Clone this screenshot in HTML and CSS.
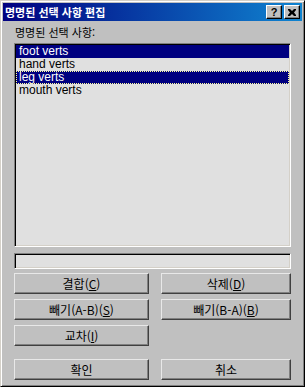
FILE: index.html
```html
<!DOCTYPE html>
<html lang="ko">
<head>
<meta charset="UTF-8">
<meta name="viewport" content="width=device-width, initial-scale=1.0">
<title>명명된 선택 사항 편집</title>
<link rel="stylesheet" href="styles.css">
</head>
<body>
<div class="window">
  <!-- Title bar -->
  <div class="titlebar">
    <span class="title">명명된 선택 사항 편집</span>
    <div class="title-buttons">
      <span class="tbtn help">?</span>
      <span class="tbtn close">
        <svg width="8" height="7" viewBox="0 0 8 7"><path d="M0 0h2l2 2 2-2h2v1L6 3.5 8 6v1H6L4 5 2 7H0V6l2-2.5L0 1z" fill="#000"/></svg>
      </span>
    </div>
  </div>

  <div class="content">
    <div class="label">명명된 선택 사항:</div>
    <div class="listbox">
      <div class="item selected">foot verts</div>
      <div class="item">hand verts</div>
      <div class="item selected focus">leg verts</div>
      <div class="item">mouth verts</div>
    </div>
    <div class="editbox"></div>

    <div class="buttons">
      <button>결합(<u>C</u>)</button>
      <button>삭제(<u>D</u>)</button>
      <button>빼기(A-B)(<u>S</u>)</button>
      <button>빼기(B-A)(<u>B</u>)</button>
      <button>교차(<u>I</u>)</button>
    </div>

    <div class="buttons bottom">
      <button>확인</button>
      <button>취소</button>
    </div>
  </div>
</div>
</body>
</html>
```

FILE: styles.css
```css
/* Page */
body {
  margin: 0;
  padding: 0;
  background-color: #c0c0c0;
  font-family: "Noto Sans CJK KR", "Liberation Sans", sans-serif;
  font-size: 11px;
}

/* Window frame (classic raised border) */
.window {
  width: 305px;
  height: 387px;
  box-sizing: border-box;
  background-color: #c0c0c0;
  border: 1px solid;
  border-color: #d4d0c8 #000 #000 #d4d0c8;
  box-shadow: inset 1px 1px #fff, inset -1px -1px #808080;
  padding: 2px;
}

/* Title bar */
.titlebar {
  height: 18px;
  display: flex;
  align-items: center;
  justify-content: space-between;
  background: linear-gradient(to right, #000080, #1084d0);
  color: #fff;
  padding: 0 2px 0 2px;
}

.title {
  font-weight: bold;
  line-height: 18px;
}

.title-buttons {
  display: flex;
  gap: 2px;
}

.tbtn {
  width: 16px;
  height: 14px;
  box-sizing: border-box;
  background-color: #c0c0c0;
  border: 1px solid;
  border-color: #fff #000 #000 #fff;
  box-shadow: inset -1px -1px #808080;
  display: flex;
  align-items: center;
  justify-content: center;
  color: #000;
}

.tbtn.help {
  font-family: "Liberation Sans", sans-serif;
  font-weight: bold;
  font-size: 11px;
  line-height: 12px;
}

/* Dialog content */
.content {
  padding: 4px 11px 0 11px;
}

.label {
  line-height: 14px;
  height: 14px;
  margin-left: 1px;
  margin-bottom: 4px;
}

/* List box (sunken) */
.listbox {
  height: 204px;
  box-sizing: border-box;
  background-color: #e0e0e0;
  border: 1px solid;
  border-color: #808080 #fff #fff #808080;
  box-shadow: inset 1px 1px #000, inset -1px -1px #d4d0c8;
  padding: 1px;
}

.item {
  font-family: "Liberation Sans", sans-serif;
  font-size: 12px;
  line-height: 13px;
  height: 13px;
  padding-left: 3px;
  color: #000;
}

.item.selected {
  background-color: #000080;
  color: #fff;
}

.item.focus {
  outline: 1px dotted #ffff99;
  outline-offset: -1px;
}

/* Edit box under the list */
.editbox {
  margin-top: 6px;
  height: 16px;
  box-sizing: border-box;
  background-color: #e0e0e0;
  border: 1px solid;
  border-color: #808080 #fff #fff #808080;
  box-shadow: inset 1px 1px #000, inset -1px -1px #d4d0c8;
}

/* Buttons */
.buttons {
  display: grid;
  grid-template-columns: 135px 130px;
  column-gap: 12px;
  row-gap: 5px;
  margin-top: 4px;
}

.buttons.bottom {
  margin-top: 13px;
}

button {
  height: 21px;
  box-sizing: border-box;
  background-color: #c0c0c0;
  border: 1px solid;
  border-color: #e8e8e8 #404040 #404040 #e8e8e8;
  box-shadow: inset -1px -1px #808080;
  font-family: "Noto Sans CJK KR", "Liberation Sans", sans-serif;
  font-size: 12px;
  color: #000;
  padding: 0;
  line-height: 18px;
}
```
